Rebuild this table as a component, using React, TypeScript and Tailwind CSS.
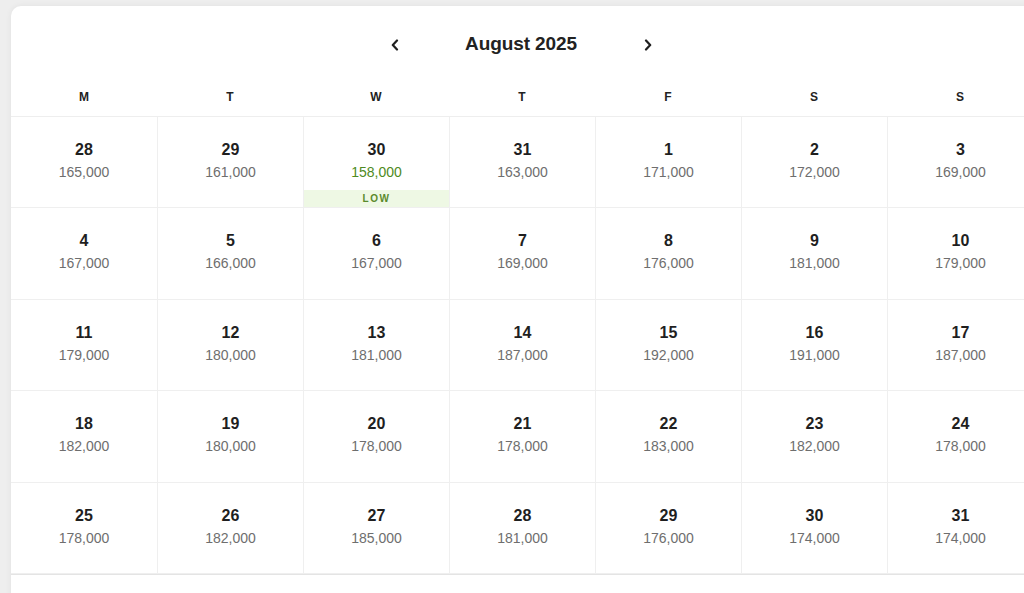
import React from "react";

const rows: [number, string][][] = [
  [[28, "165,000"], [29, "161,000"], [30, "158,000"], [31, "163,000"], [1, "171,000"], [2, "172,000"], [3, "169,000"]],
  [[4, "167,000"], [5, "166,000"], [6, "167,000"], [7, "169,000"], [8, "176,000"], [9, "181,000"], [10, "179,000"]],
  [[11, "179,000"], [12, "180,000"], [13, "181,000"], [14, "187,000"], [15, "192,000"], [16, "191,000"], [17, "187,000"]],
  [[18, "182,000"], [19, "180,000"], [20, "178,000"], [21, "178,000"], [22, "183,000"], [23, "182,000"], [24, "178,000"]],
  [[25, "178,000"], [26, "182,000"], [27, "185,000"], [28, "181,000"], [29, "176,000"], [30, "174,000"], [31, "174,000"]],
];

const days = ["M", "T", "W", "T", "F", "S", "S"];

function Chevron({ dir }: { dir: "left" | "right" }) {
  return (
    <svg width="10" height="12" viewBox="0 0 10 12" fill="none">
      <path
        d={dir === "left" ? "M7 1.5 L2.8 6 L7 10.5" : "M3 1.5 L7.2 6 L3 10.5"}
        stroke="#1f1f1f"
        strokeWidth="2.2"
        strokeLinecap="round"
        strokeLinejoin="round"
      />
    </svg>
  );
}

export default function App() {
  return (
    <div
      className="w-[1024px] h-[593px] overflow-hidden bg-[#eeeeee] pt-[6px] pl-[11px]"
      style={{ fontFamily: '"Liberation Sans", Arial, sans-serif' }}
    >
      <div className="w-[1022px] h-[600px] bg-white rounded-tl-[10px] shadow-[0_0_6px_rgba(0,0,0,0.06)]">
        <div className="flex items-center justify-center h-[77px]">
          <div className="w-[10px] flex justify-center ml-[-2px]">
            <Chevron dir="left" />
          </div>
          <div className="w-[243px] text-center text-[19px] font-semibold text-[#222222] tracking-[-0.1px]">
            August 2025
          </div>
          <div className="w-[10px] flex justify-center">
            <Chevron dir="right" />
          </div>
        </div>
        <div className="grid grid-cols-[repeat(7,146px)] h-[34px] border-b border-[#eeeeee]">
          {days.map((d, i) => (
            <div key={i} className="flex items-center justify-center pb-[6px] text-[12px] font-bold text-[#222222]">
              {d}
            </div>
          ))}
        </div>
        {rows.map((row, ri) => (
          <div key={ri} className="grid grid-cols-[repeat(7,146px)] h-[91.4px] border-b border-[#efefef]">
            {row.map(([n, p], ci) => {
              const low = ri === 0 && ci === 2;
              return (
                <div
                  key={ci}
                  className={`relative flex flex-col items-center pt-[24px] ${ci > 0 ? "border-l border-[#efefef]" : ""}`}
                >
                  <div className="text-[16px] leading-[18px] font-bold text-[#1f1f1f]">{n}</div>
                  <div className={`text-[14px] leading-[18px] mt-[4px] ${low ? "text-[#4e8a22]" : "text-[#6e6e6e]"}`}>
                    {p}
                  </div>
                  {low && (
                    <div className="absolute left-0 right-0 bottom-0 h-[17px] bg-[#eef8e4] flex items-center justify-center text-[10px] font-bold tracking-[1.5px] text-[#5a8a2c]">
                      LOW
                    </div>
                  )}
                </div>
              );
            })}
          </div>
        ))}
        <div className="h-[1px] bg-[#e4e4e4]" />
      </div>
    </div>
  );
}
